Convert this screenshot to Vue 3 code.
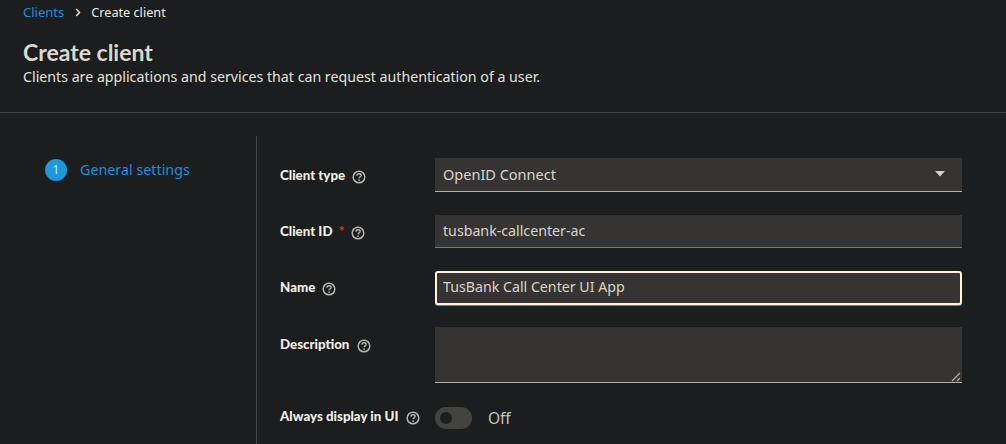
<template>
  <div class="page">
    <nav class="breadcrumb">
      <a class="crumb-link">Clients</a>
      <svg class="crumb-sep" viewBox="0 0 8 12"><path d="M1.6 1.4 6 6l-4.4 4.6" /></svg>
      <span class="crumb-current">Create client</span>
    </nav>

    <header class="page-header">
      <h1>Create client</h1>
      <p>Clients are applications and services that can request authentication of a user.</p>
    </header>

    <main class="wizard">
      <aside class="steps">
        <span class="step-num">1</span>
        <span class="step-label">General settings</span>
      </aside>

      <form class="client-form">
        <div class="form-row row-type">
          <label>Client type <HelpIcon /></label>
          <div class="select-box">
            <span>OpenID Connect</span>
            <svg class="caret" viewBox="0 0 10 6"><path d="M0 0h10L5 5.5z" /></svg>
          </div>
        </div>

        <div class="form-row row-id">
          <label>Client ID <span class="required">*</span> <HelpIcon /></label>
          <input class="blue-line" type="text" :value="clientId">
        </div>

        <div class="form-row row-name">
          <label>Name <HelpIcon /></label>
          <input class="focused" type="text" :value="clientName">
        </div>

        <div class="form-row row-desc">
          <label>Description <HelpIcon /></label>
          <div class="textarea-box">
            <textarea></textarea>
            <svg class="resizer" viewBox="0 0 10 10"><path d="M1 9 9 1M6 9l3-3" /></svg>
          </div>
        </div>

        <div class="form-row row-toggle">
          <label>Always display in UI <HelpIcon /></label>
          <div class="toggle-wrap">
            <span class="toggle"><span class="knob"></span></span>
            <span class="toggle-text">Off</span>
          </div>
        </div>
      </form>
    </main>
  </div>
</template>

<script setup>
import { h } from 'vue'

const clientId = 'tusbank-callcenter-ac'
const clientName = 'TusBank Call Center UI App'

const HelpIcon = () =>
  h('svg', { class: 'help-icon', viewBox: '0 0 14 14', style: 'width:14px;height:14px;margin-left:4px;vertical-align:-4px' }, [
    h('circle', { cx: 7, cy: 7, r: 5.8, fill: 'none', stroke: '#b8b4ac', 'stroke-width': 1.5 }),
    h('path', { d: 'M5 5.7c0-1.2.9-1.9 2.1-1.9s2 .7 2 1.7c0 1.4-2 1.4-2 2.7', fill: 'none', stroke: '#b8b4ac', 'stroke-width': 1.4 }),
    h('circle', { cx: 7.1, cy: 10.1, r: 0.9, fill: '#b8b4ac' })
  ])
</script>

<style>
html, body {
  margin: 0;
  background: #1b1d1f;
  overflow: hidden;
}
</style>

<style scoped>
.page {
  width: 1006px;
  height: 444px;
  overflow: hidden;
  background: #1b1d1f;
  color: #e6e2da;
  font-family: "Noto Sans", "Open Sans", sans-serif;
  font-size: 14px;
}

.breadcrumb {
  display: flex;
  align-items: center;
  height: 24px;
  padding-left: 23px;
  font-size: 13px;
}

.crumb-link {
  color: #1f8fd8;
}

.crumb-sep {
  width: 6px;
  height: 9px;
  margin: 0 10px 0 11px;
  fill: none;
  stroke: #e6e2da;
  stroke-width: 2;
}

.crumb-current {
  color: #f0ece4;
  font-size: 12.7px;
}

.page-header {
  height: 89px;
  padding: 14px 0 0 23px;
  box-sizing: border-box;
  border-bottom: 1px solid #464441;
}

.page-header h1 {
  margin: 0;
  font-family: Lato, "Noto Sans", sans-serif;
  font-size: 23px;
  line-height: 28px;
  font-weight: 700;
  color: #ded7cb;
}

.page-header p {
  margin: 0;
  font-size: 14.2px;
  line-height: 21px;
}

.wizard {
  display: flex;
  margin-top: 23px;
}

.steps {
  width: 257px;
  height: 308px;
  padding: 23px 0 0 45px;
  box-sizing: border-box;
  border-right: 1px solid #464441;
  display: flex;
  align-items: flex-start;
  gap: 14px;
}

.step-num {
  width: 22px;
  height: 22px;
  border-radius: 50%;
  background: #1a9ad9;
  color: #d5e9f3;
  font-size: 12px;
  line-height: 22px;
  text-align: center;
}

.step-label {
  color: #1f8fd8;
  font-size: 14.3px;
  line-height: 22px;
  margin-left: -1px;
}

.client-form {
  padding: 22px 0 0 23px;
  width: 682px;
}

.form-row {
  display: grid;
  grid-template-columns: 155px 527px;
  align-items: start;
}

.form-row label {
  font-family: Lato, "Noto Sans", sans-serif;
  font-size: 13.3px;
  font-weight: 900;
  color: #f2efe8;
  line-height: 20px;
}

.required {
  color: #e02c1f;
  margin-left: 3px;
}

.select-box,
input,
textarea {
  box-sizing: border-box;
  width: 100%;
  background: #363432;
  color: #d9d4ca;
  border: 0;
  border-radius: 0;
  outline: 0;
  font-family: inherit;
  font-size: 14.2px;
  padding: 0 8px 2px;
  margin: 0;
  display: block;
}

.select-box {
  height: 34px;
  border-bottom: 1px solid #b5b1a8;
  display: flex;
  align-items: center;
  justify-content: space-between;
  font-size: 14.5px;
}

.caret {
  width: 10px;
  height: 6px;
  margin-right: 9px;
  fill: #d9d4ca;
}

.row-type { height: 57px; }
.row-type label { padding-top: 7px; }
.row-id { height: 57px; }
.row-id label { padding-top: 6px; }
.row-name { height: 55px; }
.row-name label { padding-top: 5px; }
.row-desc { height: 80px; }
.row-desc label { padding-top: 7px; }
.row-toggle label { display: block; margin-top: -1px; }

input {
  height: 33px;
}

.blue-line {
  border-bottom: 1px solid #1a9ad9;
}

.focused {
  height: 34px;
  margin-top: -1px;
  border: 2px solid #fff3e0;
  border-radius: 3px;
  padding: 0 6px 4px;
  box-shadow: 0 1px 0 #1a9ad9;
}

.textarea-box {
  position: relative;
  height: 56px;
}

textarea {
  height: 56px;
  border-bottom: 1px solid #b5b1a8;
  resize: none;
}

.resizer {
  position: absolute;
  right: 1px;
  bottom: 1px;
  width: 10px;
  height: 10px;
  fill: none;
  stroke: #b5b1a8;
  stroke-width: 1.2;
}

.toggle-wrap {
  display: flex;
  align-items: center;
  gap: 16px;
}

.toggle {
  width: 37px;
  height: 22px;
  border-radius: 11px;
  background: #45433f;
  display: flex;
  align-items: center;
  padding-left: 5px;
  box-sizing: border-box;
}

.knob {
  width: 12px;
  height: 12px;
  border-radius: 50%;
  background: #1b1d1f;
}

.toggle-text {
  color: #c9c5bb;
  font-size: 15.5px;
}
</style>
